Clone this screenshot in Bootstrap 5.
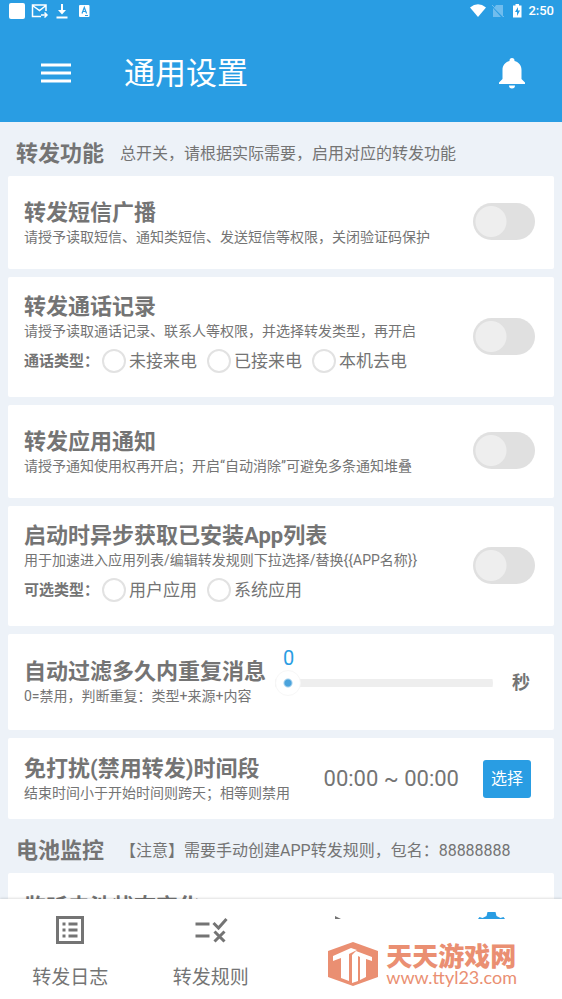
<!DOCTYPE html>
<html lang="zh-CN">
<head>
<meta charset="utf-8">
<meta name="viewport" content="width=device-width, initial-scale=1">
<title>通用设置</title>
<link href="https://cdn.jsdelivr.net/npm/bootstrap@5.3.0/dist/css/bootstrap.min.css" rel="stylesheet">
<style>
:root{--brand:#299de3;--ink:#747474;--page:#edf2f8}
body{font-family:Roboto,"Noto Sans CJK SC",sans-serif;color:var(--ink);background:var(--page)}
.topbar{background:var(--brand);color:#fff}
.statusbar{height:22px;font-size:13px;line-height:22px}
.titlebar{height:100px;padding:3px 30px 0 36px}
.titlebar h1{font-size:31px;line-height:40px}
.icon-btn{background:none;border:0;color:inherit;padding:0;width:40px;height:40px}
.page-main{min-height:0}
.sect{height:54px;padding:10px 17px 0 16px}
.sect h2{font-size:22px;line-height:28px;font-weight:700}
.sect p{font-size:16px;line-height:24px}
.panels{gap:8px}
.panel{background:#fff;border-radius:2px;padding:16px 19px 16px 16px;gap:16px}
.panel h3{font-size:22px;line-height:28px;font-weight:700}
.panel p{font-size:14px;line-height:20px;white-space:nowrap}
.simple{min-height:93px}
.options{min-height:120px}
.filter{min-height:96px;gap:9px;padding-top:12px;padding-bottom:12px}
.quiet{min-height:81px}
.kinds{font-size:15px;line-height:24px;margin-top:8px;gap:3px}
.kinds .kind-name{font-weight:700}
.kinds label{font-size:17px}
.round{appearance:none;width:24px;height:24px;border:2px solid #e2e2e2;border-radius:50%;background:#fff;margin:0 3px 0 0}
.kinds .opt{margin-right:7px}
.form-switch.toggle{padding:0;min-height:0}
.toggle .form-check-input{width:62px;height:37px;margin:0;float:none;border:0;background-color:#e0e0e0;
 background-image:radial-gradient(circle at 18px 50%,#eee 15px,transparent 16px);background-size:100% 100%;background-position:0 0;display:block}
.slide{padding-bottom:22px}
.slide output{color:var(--brand);font-size:20px;line-height:24px;padding-left:8px}
.slide input{appearance:none;display:block;width:100%;height:26px;margin:0;border-radius:13px;background:linear-gradient(#eee,#eee) center/100% 8px no-repeat}
.slide input::-webkit-slider-thumb{appearance:none;width:26px;height:26px;border-radius:50%;border:1px solid #f7f7f7;background:radial-gradient(circle,#4aa3dc 3px,#fff 5px)}
.unit{font-size:18px;font-weight:700;padding:0 5px 0 10px}
.span-time{font-size:22px;line-height:28px;white-space:nowrap}
.pick{background:var(--brand);color:#fff;font-size:16px;line-height:24px;padding:6px 7px;border-radius:3px}
.tabs{background:#fff;height:100px;box-shadow:0 -1px 2px #0000001f;z-index:2}
.tabs a{color:var(--ink);text-decoration:none;font-size:19px;line-height:28px;padding-top:13px;gap:16px}
.site-mark{right:45px;bottom:13px;color:#ea8f72;gap:8px}
.site-mark b{font-family:"Noto Sans CJK SC",sans-serif;font-size:26px;line-height:26px;font-weight:900}
.site-mark span{font-family:Lato,sans-serif;font-size:18px;line-height:18px}
</style>
<script src="https://cdn.jsdelivr.net/npm/bootstrap@5.3.0/dist/js/bootstrap.bundle.min.js"></script>
</head>
<body class="vh-100 overflow-hidden d-flex flex-column">
<header class="topbar flex-shrink-0">
 <div class="statusbar d-flex justify-content-between align-items-center px-2">
  <svg width="84" height="22" fill="none" aria-hidden="true"><rect x="1" y="3" width="16" height="16" rx="2" fill="#fff"/><path d="M33 16.500h-8.500V5H38v6M24.500 5.500l7 5 6.500-5M33 15h6m-2.500-2.500L39 15l-2.500 2.500" stroke="#fff" stroke-width="1.500"/><path d="M54 4v8M48.500 17.500h11" stroke="#fff" stroke-width="2"/><path d="M50 10h8l-4 4.500z" fill="#fff"/><rect x="71" y="5" width="10.500" height="12" rx="1" fill="#fff"/><path d="M74 13.500l2.300-6 2.300 6m-3.800-2h3M77 15.500h3" stroke="#299de3" stroke-width="1.200"/></svg>
  <div class="d-flex align-items-center">
   <svg width="58" height="22" aria-hidden="true"><path d="M0 7.500Q8 1 16 7.500L8 17z" fill="#fff"/><path d="M26 5h7v12L24 8zM23 8l8 9h-8z" fill="#70bdee"/><path d="M22 5l12 12" stroke="#70bdee" fill="none"/><path d="M43 5.500h2.500V4h3.500v1.500h2.500V17.500H43z" fill="#fff"/><path d="M48 7l-3 5h2v4l3-5.500h-2z" fill="#299de3"/></svg>
   <span class="fw-medium">2:50</span>
  </div>
 </div>
 <div class="titlebar d-flex align-items-center">
  <button class="icon-btn" type="button" aria-label="菜单"><svg width="40" height="40"><path d="M5 11h30M5 19h30M5 27h30" stroke="#fff" stroke-width="3"/></svg></button>
  <h1 class="mb-0 ms-5 fw-normal flex-grow-1">通用设置</h1>
  <button class="icon-btn" type="button" aria-label="通知"><svg width="40" height="40" fill="#fff"><path d="M20 4a2.500 2.500 0 0 1 2.500 2.500v.6c4.500 1.200 7 4.500 7 9V25l3.500 3.500V30H7v-1.500L10.500 25v-8.900c0-4.500 2.500-7.800 7-9v-.6A2.500 2.500 0 0 1 20 4zM17 31.500h6a3 3 0 0 1-6 0z"/></svg></button>
 </div>
</header>
<main class="page-main flex-grow-1 overflow-hidden">
 <div class="sect d-flex align-items-center gap-3"><h2 class="mb-0">转发功能</h2><p class="mb-0">总开关，请根据实际需要，启用对应的转发功能</p></div>
 <div class="panels d-flex flex-column mx-2">
  <section class="panel simple d-flex align-items-center">
   <div class="flex-grow-1"><h3 class="mb-0">转发短信广播</h3><p class="mb-0">请授予读取短信、通知类短信、发送短信等权限，关闭验证码保护</p></div>
   <div class="form-check form-switch toggle"><input class="form-check-input" type="checkbox" role="switch" aria-label="转发短信广播"></div>
  </section>
  <section class="panel options d-flex align-items-center">
   <div class="flex-grow-1 pb-2"><h3 class="mb-0">转发通话记录</h3><p class="mb-0">请授予读取通话记录、联系人等权限，并选择转发类型，再开启</p>
    <div class="kinds d-flex align-items-center"><span class="kind-name">通话类型：</span>
     <span class="opt d-flex align-items-center"><input class="round" type="radio" name="call" id="c1"><label for="c1">未接来电</label></span>
     <span class="opt d-flex align-items-center"><input class="round" type="radio" name="call" id="c2"><label for="c2">已接来电</label></span>
     <span class="opt d-flex align-items-center"><input class="round" type="radio" name="call" id="c3"><label for="c3">本机去电</label></span></div></div>
   <div class="form-check form-switch toggle"><input class="form-check-input" type="checkbox" role="switch" aria-label="转发通话记录"></div>
  </section>
  <section class="panel simple d-flex align-items-center">
   <div class="flex-grow-1"><h3 class="mb-0">转发应用通知</h3><p class="mb-0">请授予通知使用权再开启；开启“自动消除”可避免多条通知堆叠</p></div>
   <div class="form-check form-switch toggle"><input class="form-check-input" type="checkbox" role="switch" aria-label="转发应用通知"></div>
  </section>
  <section class="panel options d-flex align-items-center">
   <div class="flex-grow-1 pb-2"><h3 class="mb-0">启动时异步获取已安装App列表</h3><p class="mb-0">用于加速进入应用列表/编辑转发规则下拉选择/替换{{APP名称}}</p>
    <div class="kinds d-flex align-items-center"><span class="kind-name">可选类型：</span>
     <span class="opt d-flex align-items-center"><input class="round" type="radio" name="app" id="a1"><label for="a1">用户应用</label></span>
     <span class="opt d-flex align-items-center"><input class="round" type="radio" name="app" id="a2"><label for="a2">系统应用</label></span></div></div>
   <div class="form-check form-switch toggle"><input class="form-check-input" type="checkbox" role="switch" aria-label="启动时异步获取已安装App列表"></div>
  </section>
  <section class="panel filter d-flex align-items-center">
   <div><h3 class="mb-0">自动过滤多久内重复消息</h3><p class="mb-0">0=禁用，判断重复：类型+来源+内容</p></div>
   <div class="slide flex-grow-1"><output for="secs" class="d-block">0</output><input type="range" id="secs" min="0" max="100" value="0" aria-label="自动过滤秒数"></div>
   <span class="unit">秒</span>
  </section>
  <section class="panel quiet d-flex align-items-center">
   <div class="flex-grow-1"><h3 class="mb-0">免打扰(禁用转发)时间段</h3><p class="mb-0">结束时间小于开始时间则跨天；相等则禁用</p></div>
   <span class="span-time me-2">00:00 ~ 00:00</span>
   <button class="btn pick me-1" type="button">选择</button>
  </section>
 </div>
 <div class="sect d-flex align-items-center gap-3"><h2 class="mb-0">电池监控</h2><p class="mb-0">【注意】需要手动创建APP转发规则，包名：88888888</p></div>
 <div class="panels d-flex flex-column mx-2">
  <section class="panel options d-flex"><h3 class="mt-1 mb-0">监听电池状态变化</h3></section>
 </div>
</main>
<nav class="tabs flex-shrink-0 d-flex position-relative" aria-label="主导航">
 <a class="d-flex flex-column align-items-center w-25" href="#log"><svg width="36" height="36" fill="none" stroke="#747474"><path d="M5.500 5.500h25v25h-25z" stroke-width="3"/><path d="M10.500 12h3M10.500 18h3M10.500 24h3M16.500 12h9M16.500 18h9M16.500 24h9" stroke-width="3"/></svg>转发日志</a>
 <a class="d-flex flex-column align-items-center w-25" href="#rule"><svg width="36" height="36" fill="none" stroke="#747474" stroke-width="3"><path d="M2.500 12h14M2.500 24h14M20.500 11l5 5 8-9M21.500 19.500l10 10M31.500 19.500l-10 10"/></svg>转发规则</a>
 <a class="d-flex flex-column align-items-center w-25" href="#send" aria-label="发送通道"><svg width="36" height="36"><path d="M2 4l6 3H2z" fill="#747474"/></svg></a>
 <a class="d-flex flex-column align-items-center w-25" href="#set" aria-label="通用设置"><svg width="36" height="36"><path d="M4 7l1.500-2 3 1 4-2 1-4h8l1 4 4 2 3-1 1.500 2z" fill="#299de3"/></svg></a>
 <div class="site-mark position-absolute d-flex align-items-center">
  <svg class="flex-shrink-0" width="50" height="44" viewBox="0 0 50 44"><path d="M25 0L50 9v26L25 44 0 35V9z" fill="#ea8f72"/><path d="M5 14L23 6l6 2-8 4v27l-8-3V16l-8 3zM24 13l4-4 16 6v4l-6-2v18l-6 3V15l-2-1v25l-6 2z" fill="#fff"/></svg>
  <div class="d-flex flex-column"><b>天天游戏网</b><span>www.ttyl23.com</span></div>
 </div>
</nav>
</body>
</html>
